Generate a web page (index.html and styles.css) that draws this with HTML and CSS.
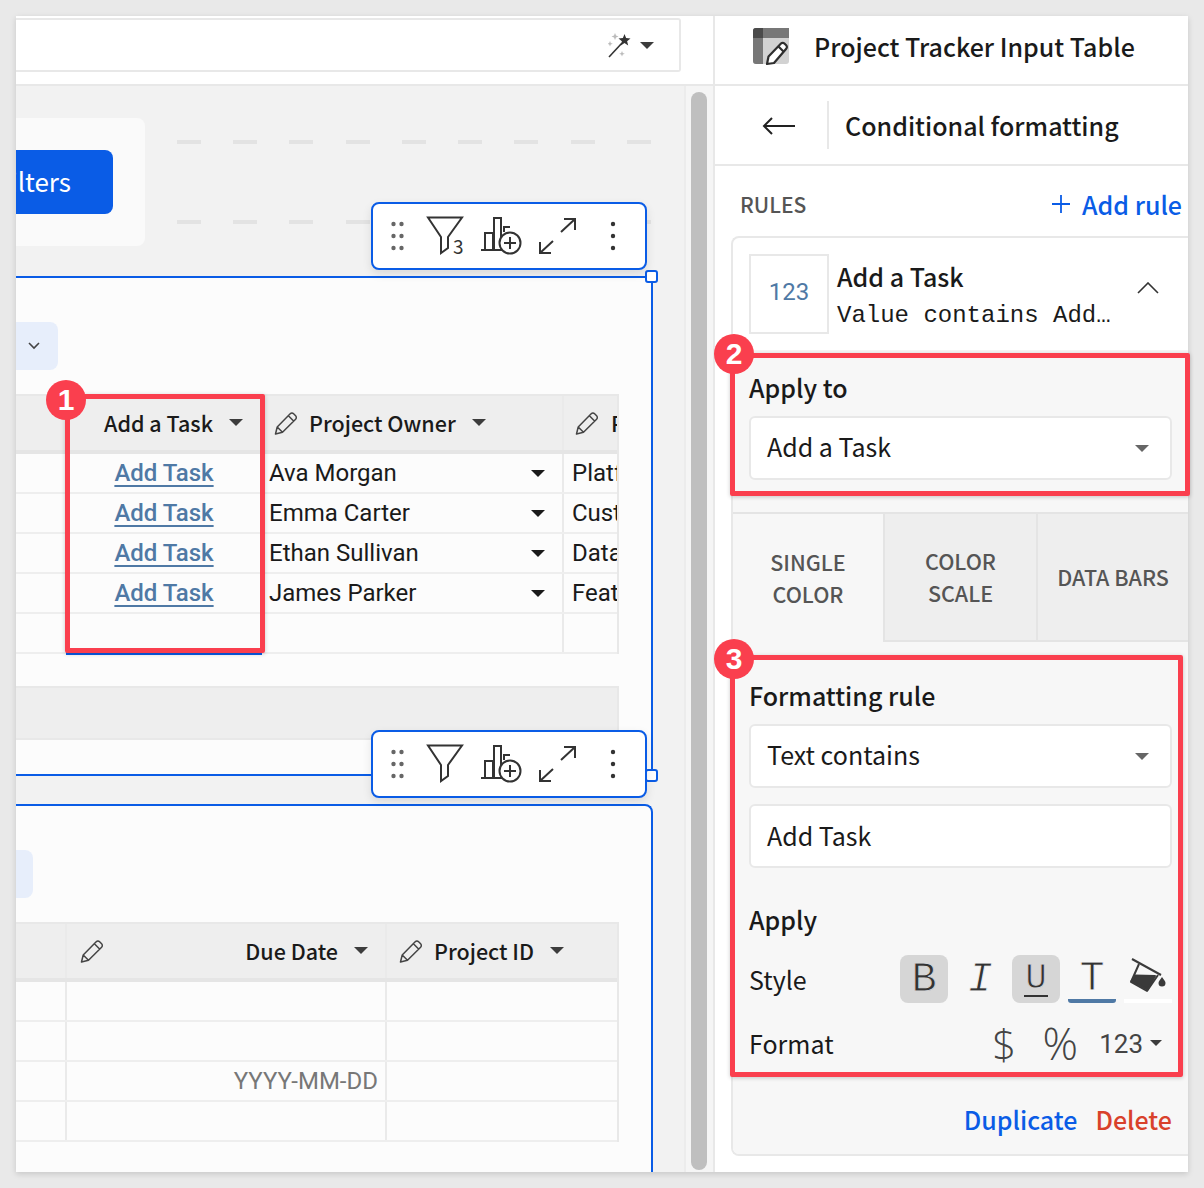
FILE: index.html
```html
<!DOCTYPE html>
<html lang="en">
<head>
    <meta charset="UTF-8">
    <title>Conditional formatting</title>
    <link rel="stylesheet" href="styles.css">
</head>
<body>
<svg class="defs" width="0" height="0">
    <symbol id="pencil" viewBox="0 0 24 24">
        <path d="M1.500 23l1.700-7L16.200 2.800a2.400 2.400 0 0 1 3.400 0l2 2a2.400 2.400 0 0 1 0 3.400L8.500 21.300z M14.400 4.800l5.200 5.200 M3.200 16l5.300 5.300" fill="none" stroke="#444" stroke-width="1.500" stroke-linejoin="round"/>
    </symbol>
    <symbol id="grip" viewBox="0 0 13 30">
        <g fill="#666"><circle cx="2.500" cy="3" r="2.200"/><circle cx="10.500" cy="3" r="2.200"/><circle cx="2.500" cy="15" r="2.200"/><circle cx="10.500" cy="15" r="2.200"/><circle cx="2.500" cy="27" r="2.200"/><circle cx="10.500" cy="27" r="2.200"/></g>
    </symbol>
    <symbol id="chartadd" viewBox="0 0 41 38">
        <path d="M0 33h23 M4 33V16h8v17 M13 33V1h7v24 M23 15v-5h6" fill="none" stroke="#333" stroke-width="2"/>
        <circle cx="29" cy="26" r="10.500" fill="#fff" stroke="#333" stroke-width="2"/>
        <path d="M29 20v12 M23 26h12" stroke="#333" stroke-width="2"/>
    </symbol>
    <symbol id="expand" viewBox="0 0 39 37">
        <path d="M23 14L37 1 M26 1h11v11 M15 23L2 35 M2 24v11h11" fill="none" stroke="#333" stroke-width="2"/>
    </symbol>
    <symbol id="more" viewBox="0 0 6 30">
        <g fill="#333"><circle cx="3" cy="3" r="2.200"/><circle cx="3" cy="15" r="2.200"/><circle cx="3" cy="27" r="2.200"/></g>
    </symbol>
</svg>

<div class="frame">
    <div class="main">
        <div class="topbar">
            <div class="searchbox">
                <svg class="wand" width="24" height="26" viewBox="0 0 24 26">
                    <path d="M1 25L14 11" stroke="#333" stroke-width="1.600"/>
                    <path d="M16.500 2l1.600 4 4.400 .4-3.400 2.800 1.100 4.300-3.700-2.400-3.700 2.400 1.100-4.300L10.500 6.400l4.400-.4z" fill="#333"/>
                    <path d="M7 1l1 2.500L10.500 4.500 8 5.500 7 8 6 5.500 3.500 4.500 6 3.500z M2 9l.8 2 2 .8-2 .8-.8 2-.8-2-2-.8 2-.8z M14 19l.8 2 2 .8-2 .8-.8 2-.8-2-2-.8 2-.8z" fill="#bbb"/>
                </svg>
                <span class="caret caret-dark"></span>
            </div>
        </div>
        <div class="workspace">
            <div class="canvas">
                <div class="filter-row">
                    <div class="filter-card"><div class="filter-btn"><span>Filters</span></div></div>
                    <div class="dashes"><div class="dash"></div><div class="dash"></div></div>
                </div>

                <div class="el el-first">
                    <div class="toolbar toolbar-a">
                        <div class="tool tool-grip"><svg width="13" height="30"><use href="#grip"/></svg></div>
                        <div class="tool">
                            <svg class="funnel" width="38" height="40" viewBox="0 0 38 40">
                                <path d="M2 1.500h34L22 21v11l-7 5V21z" fill="none" stroke="#333" stroke-width="2"/>
                                <text x="27" y="38" class="tool-num">3</text>
                            </svg>
                        </div>
                        <div class="tool"><svg width="41" height="38"><use href="#chartadd"/></svg></div>
                        <div class="tool"><svg width="39" height="37"><use href="#expand"/></svg></div>
                        <div class="tool"><svg width="6" height="30"><use href="#more"/></svg></div>
                    </div>
                    <span class="handle handle-top"></span>
                    <span class="handle handle-bottom"></span>
                    <div class="toolbar toolbar-b">
                        <div class="tool tool-grip"><svg width="13" height="30"><use href="#grip"/></svg></div>
                        <div class="tool">
                            <svg class="funnel" width="38" height="40" viewBox="0 0 38 40">
                                <path d="M2 1.500h34L22 21v11l-7 5V21z" fill="none" stroke="#333" stroke-width="2"/>
                            </svg>
                        </div>
                        <div class="tool"><svg width="41" height="38"><use href="#chartadd"/></svg></div>
                        <div class="tool"><svg width="39" height="37"><use href="#expand"/></svg></div>
                        <div class="tool"><svg width="6" height="30"><use href="#more"/></svg></div>
                    </div>

                    <div class="chip chip-wide">
                        <svg width="12" height="8" viewBox="0 0 12 8"><path d="M1 1l5 5 5-5" fill="none" stroke="#444" stroke-width="1.600"/></svg>
                    </div>

                    <div class="grid grid-tasks">
                        <div class="row row-head">
                            <div class="cell"></div>
                            <div class="cell head-task"><b>Add a Task</b><span class="caret caret-dark"></span></div>
                            <div class="cell head-owner"><svg width="24" height="24"><use href="#pencil"/></svg><b>Project Owner</b><span class="caret caret-dark"></span></div>
                            <div class="cell head-clip"><svg width="24" height="24"><use href="#pencil"/></svg><b>Project</b></div>
                        </div>
                        <div class="row">
                            <div class="cell"></div>
                            <div class="cell cell-link"><a>Add Task</a></div>
                            <div class="cell cell-pick"><span>Ava Morgan</span><span class="caret"></span></div>
                            <div class="cell cell-clip">Platform</div>
                        </div>
                        <div class="row">
                            <div class="cell"></div>
                            <div class="cell cell-link"><a>Add Task</a></div>
                            <div class="cell cell-pick"><span>Emma Carter</span><span class="caret"></span></div>
                            <div class="cell cell-clip">Customer</div>
                        </div>
                        <div class="row">
                            <div class="cell"></div>
                            <div class="cell cell-link"><a>Add Task</a></div>
                            <div class="cell cell-pick"><span>Ethan Sullivan</span><span class="caret"></span></div>
                            <div class="cell cell-clip">Data</div>
                        </div>
                        <div class="row">
                            <div class="cell"></div>
                            <div class="cell cell-link"><a>Add Task</a></div>
                            <div class="cell cell-pick"><span>James Parker</span><span class="caret"></span></div>
                            <div class="cell cell-clip">Feature</div>
                        </div>
                        <div class="row">
                            <div class="cell"></div>
                            <div class="cell cell-link"></div>
                            <div class="cell"></div>
                            <div class="cell"></div>
                        </div>
                    </div>
                    <div class="grey-bar"></div>
                </div>

                <div class="el el-second">
                    <div class="chip chip-narrow"></div>
                    <div class="grid grid-dates">
                        <div class="row row-head">
                            <div class="cell"></div>
                            <div class="cell head-date"><svg width="24" height="24"><use href="#pencil"/></svg><b>Due Date</b><span class="caret caret-dark"></span></div>
                            <div class="cell head-owner"><svg width="24" height="24"><use href="#pencil"/></svg><b>Project ID</b><span class="caret caret-dark"></span></div>
                        </div>
                        <div class="row"><div class="cell"></div><div class="cell"></div><div class="cell"></div></div>
                        <div class="row"><div class="cell"></div><div class="cell"></div><div class="cell"></div></div>
                        <div class="row"><div class="cell"></div><div class="cell cell-hint">YYYY-MM-DD</div><div class="cell"></div></div>
                        <div class="row"><div class="cell"></div><div class="cell"></div><div class="cell"></div></div>
                    </div>
                </div>
            </div>
            <div class="scroll-side"><div class="scroll-thumb"></div></div>
        </div>
    </div>

    <div class="panel">
        <div class="panel-title">
            <svg width="38" height="38" viewBox="0 0 38 38">
                <rect width="36" height="36" rx="3" fill="#d2d2d2"/>
                <path d="M3 0h33v10H10v26H3a3 3 0 0 1-3-3V3a3 3 0 0 1 3-3z" fill="#777"/>
                <path d="M3 0h7v10H0V3a3 3 0 0 1 3-3z" fill="#4a4a4a"/>
                <path d="M14 36l1.500-7.500L28 15.500a2.400 2.400 0 0 1 3.400 0l1.800 1.800a2.400 2.400 0 0 1 0 3.400L21 35z" fill="#fff" stroke="#2e2e2e" stroke-width="2.200" stroke-linejoin="round"/>
                <path d="M25.500 18.500l5.500 5.500" stroke="#2e2e2e" stroke-width="2.200"/>
            </svg>
            <h1>Project Tracker Input Table</h1>
        </div>
        <div class="panel-nav">
            <div class="back">
                <svg width="34" height="18" viewBox="0 0 34 18"><path d="M33 9H2 M10 1L2 9l8 8" fill="none" stroke="#222" stroke-width="2"/></svg>
            </div>
            <h2>Conditional formatting</h2>
        </div>
        <div class="rules-head">
            <span class="rules-label">RULES</span>
            <a class="add-rule"><svg width="18" height="18" viewBox="0 0 18 18"><path d="M9 0v18 M0 9h18" stroke="#0a5ce6" stroke-width="1.800"/></svg>Add rule</a>
        </div>

        <div class="rule-card">
            <div class="rule-head">
                <div class="type-box">123</div>
                <div class="rule-text">
                    <strong>Add a Task</strong>
                    <span>Value contains Add…</span>
                </div>
                <svg class="chev" width="22" height="12" viewBox="0 0 22 12"><path d="M1 11L11 1l10 10" fill="none" stroke="#333" stroke-width="1.600"/></svg>
            </div>
            <div class="rule-body">
                <div class="apply-to">
                    <div class="field-label">Apply to</div>
                    <div class="select"><span>Add a Task</span><span class="caret caret-grey"></span></div>
                </div>
                <div class="tabs">
                    <div class="tab tab-on">SINGLE<br>COLOR</div>
                    <div class="tab tab-mid">COLOR<br>SCALE</div>
                    <div class="tab tab-last">DATA BARS</div>
                </div>
                <div class="form">
                    <div class="field-label">Formatting rule</div>
                    <div class="select"><span>Text contains</span><span class="caret caret-grey"></span></div>
                    <div class="select select-input">Add Task</div>
                    <div class="field-label label-apply">Apply</div>
                    <div class="opt-row opt-style">
                        <span>Style</span>
                        <div class="opts">
                            <div class="opt opt-on">B</div>
                            <div class="opt opt-italic">I</div>
                            <div class="opt opt-on opt-under"><span>U</span></div>
                            <div class="opt opt-color">T</div>
                            <div class="opt opt-fill">
                                <svg width="36" height="38" viewBox="0 0 36 38">
                                    <path d="M2 1l29 16" fill="none" stroke="#3a3a3a" stroke-width="2"/>
                                    <path d="M9 6L1 24l16 9 11-16" fill="none" stroke="#3a3a3a" stroke-width="2" stroke-linejoin="round"/>
                                    <path d="M5 17.500L25 18 17.500 31.500 1.500 23z" fill="#3a3a3a" stroke="#3a3a3a" stroke-linejoin="round" stroke-width="2"/>
                                    <path d="M32 19c2 3 3.500 4.500 3.500 6a3.500 3.500 0 0 1-7 0c0-1.500 1.500-3 3.500-6z" fill="#3a3a3a"/>
                                </svg>
                            </div>
                        </div>
                    </div>
                    <div class="opt-row opt-format">
                        <span>Format</span>
                        <div class="formats">
                            <i class="fmt-dollar">$</i>
                            <i class="fmt-pct">%</i>
                            <i class="fmt-num">123</i>
                            <span class="caret caret-dark caret-small"></span>
                        </div>
                    </div>
                </div>
                <div class="card-actions">
                    <a class="act-dup">Duplicate</a>
                    <a class="act-del">Delete</a>
                </div>
            </div>
        </div>
    </div>

    <!-- callouts drawn over the screenshot -->
    <div class="mark mark-1"></div>
    <div class="mark mark-2"></div>
    <div class="mark mark-3"></div>
    <div class="badge badge-1">1</div>
    <div class="badge badge-2">2</div>
    <div class="badge badge-3">3</div>
</div>
</body>
</html>
```

FILE: styles.css
```css
:root {
    --blue: #0a5ce6;
    --link: #4f79a5;
    --line: #e8e8e8;
    --red: #fa3f4e;
    --sans: "Noto Sans CJK SC", "Noto Sans", sans-serif;
}
* { box-sizing: border-box; }
html, body { margin: 0; height: 100%; overflow: hidden; }
body {
    background: #e9e9e9;
    font-family: var(--sans);
    color: #1a1a1a;
    padding: 16px 0 0 16px;
}
.defs { position: absolute; }
b { font-weight: 500; }
svg { flex: none; }

.frame {
    position: relative;
    display: flex;
    width: 1172px;
    height: 1156px;
    background: #fff;
    box-shadow: 0 2px 6px rgba(0,0,0,0.15);
}
.main {
    width: 699px;
    display: flex;
    flex-direction: column;
    border-right: 2px solid var(--line);
}

/* top bar */
.topbar {
    height: 70px;
    padding-top: 2px;
    border-bottom: 2px solid var(--line);
}
.searchbox {
    width: 665px;
    height: 54px;
    border: 2px solid var(--line);
    border-left: none;
    border-radius: 0 3px 3px 0;
    display: flex;
    align-items: center;
    justify-content: flex-end;
    gap: 8px;
    padding-right: 25px;
}

.caret {
    display: inline-block;
    flex: none;
    width: 0;
    height: 0;
    border-left: 7px solid transparent;
    border-right: 7px solid transparent;
    border-top: 7px solid #1a1a1a;
}
.caret-dark { border-top-color: #3c3c3c; }
.caret-grey { border-top-color: #666; }
.caret-small { border-left-width: 6px; border-right-width: 6px; border-top-width: 6px; }

/* canvas */
.workspace { flex: 1; display: flex; min-height: 0; }
.canvas {
    width: 668px;
    background: #f2f2f2;
    padding-top: 32px;
    overflow: hidden;
}
.scroll-side {
    flex: 1;
    background: #f5f5f5;
    border-left: 2px solid #ececec;
    padding: 6px 6px 2px 5px;
}
.scroll-thumb {
    height: 100%;
    background: #bfbfbf;
    border-radius: 8px;
}
.filter-row { display: flex; height: 128px; }
.filter-card {
    width: 129px;
    background: #fafafa;
    border-radius: 0 8px 8px 0;
    padding-top: 32px;
}
.filter-btn {
    width: 97px;
    height: 64px;
    background: var(--blue);
    border-radius: 0 8px 8px 0;
    color: #fff;
    font-size: 26px;
    line-height: 62px;
    overflow: hidden;
    display: flex;
    justify-content: flex-end;
    padding-right: 42px;
    white-space: nowrap;
}
.dashes {
    margin-left: 32px;
    width: 474px;
    padding-top: 22px;
}
.dash {
    height: 4px;
    margin-bottom: 76px;
    background: repeating-linear-gradient(90deg, #e3e3e3 0 24px, transparent 24px 56.25px);
}

.el {
    position: relative;
    width: 637px;
    background: #fcfcfc;
    padding-top: 44px;
}
.el-first {
    height: 500px;
    margin-top: 30px;
    border-top: 2px solid var(--blue);
    border-right: 2px solid var(--blue);
    border-bottom: 2px solid var(--blue);
}
.el-second {
    height: 400px;
    margin-top: 28px;
    border-top: 2px solid var(--blue);
    border-right: 2px solid var(--blue);
    border-radius: 0 8px 0 0;
}
.toolbar {
    position: absolute;
    right: 4px;
    z-index: 2;
    display: flex;
    align-items: center;
    width: 276px;
    height: 68px;
    padding-left: 4px;
    background: #fff;
    border: 2px solid var(--blue);
    border-radius: 8px;
    box-shadow: 0 4px 10px rgba(0,0,0,0.1);
}
.toolbar-a { top: -76px; }
.toolbar-b { top: 452px; }
.tool {
    width: 56px;
    display: flex;
    justify-content: center;
    align-items: center;
}
.tool-grip { width: 40px; }
.funnel { overflow: visible; }
.tool-num { font: 19px var(--sans); fill: #333; }
.handle {
    position: absolute;
    right: -7px;
    z-index: 1;
    width: 13px;
    height: 13px;
    background: #fff;
    border: 2px solid var(--blue);
    border-radius: 3px;
}
.handle-top { top: -8px; }
.handle-bottom { bottom: -8px; }

.chip {
    height: 48px;
    background: #e7eefb;
    border-radius: 0 8px 8px 0;
    display: flex;
    align-items: center;
    justify-content: flex-end;
}
.chip-wide { width: 42px; padding-right: 18px; }
.chip-narrow { width: 17px; }

/* tables */
.grid {
    width: 603px;
    margin-top: 24px;
    border-top: 2px solid var(--line);
    border-right: 2px solid var(--line);
}
.row {
    display: grid;
    height: 40px;
    border-bottom: 2px solid #eee;
}
.grid-tasks .row { grid-template-columns: 50px 196px 300px 55px; }
.grid-dates .row { grid-template-columns: 49px 320px 232px; }
.row-head {
    height: 58px;
    background: #eee;
    border-bottom: 4px solid #e5e5e5;
}
.cell {
    display: flex;
    align-items: center;
    overflow: hidden;
    white-space: nowrap;
    font-family: Roboto, sans-serif;
    font-size: 24px;
}
.grid-tasks .cell:nth-child(4),
.grid-dates .cell:nth-child(2),
.grid-dates .cell:nth-child(3) { border-left: 2px solid #eaeaea; }
.row-head .cell { font-family: var(--sans); font-size: 21.5px; padding-bottom: 1px; }
.head-task { justify-content: flex-end; gap: 16px; padding-right: 19px; }
.row-head .head-owner { gap: 11px; padding-left: 12px; }
.head-owner .caret { margin-left: 5px; }
.row-head .head-clip { gap: 12px; padding-left: 11px; }
.head-date { padding: 0 17px 0 13px; gap: 16px; }
.head-date svg { margin-right: auto; }
.cell-link { justify-content: center; }
.cell-link a {
    color: var(--link);
    font-weight: 500;
    text-decoration: underline;
    text-underline-offset: 4px;
    text-decoration-thickness: 2px;
}
.grid-tasks .cell-link { box-shadow: inset -1px 0 0 #7fa6ea; }
.grid-tasks .row:last-child .cell-link { box-shadow: inset -1px 0 0 #7fa6ea, 0 3px 0 var(--blue); overflow: visible; }
.cell-pick { justify-content: space-between; padding: 0 17px 0 7px; }
.cell-clip { padding-left: 8px; }
.cell-hint { justify-content: flex-end; padding-right: 7px; color: #777; }
.grey-bar {
    width: 603px;
    height: 54px;
    margin-top: 32px;
    background: #eee;
    border: 2px solid #e8e8e8;
    border-left: none;
}

/* right panel */
.panel { flex: 1; min-width: 0; }
.panel-title {
    height: 70px;
    display: flex;
    align-items: center;
    gap: 23px;
    padding: 0 0 6px 38px;
    border-bottom: 2px solid var(--line);
}
h1, h2 { margin: 0; font-size: 25px; font-weight: 500; line-height: 36px; }
h1 { margin-bottom: 2px; }
.panel-nav {
    height: 80px;
    display: flex;
    align-items: center;
    border-bottom: 2px solid var(--line);
}
.back {
    width: 114px;
    height: 48px;
    margin-right: 16px;
    padding: 15px 0 0 47px;
    border-right: 2px solid var(--line);
}
.rules-head {
    height: 70px;
    display: flex;
    align-items: center;
    justify-content: space-between;
    padding: 6px 6px 0 25px;
}
.rules-label { font-size: 21px; font-weight: 500; color: #555; }
.add-rule {
    display: flex;
    align-items: center;
    gap: 12px;
    font-size: 25px;
    font-weight: 500;
    color: var(--blue);
}
.rule-card {
    margin-left: 16px;
    height: 920px;
    border: 2px solid var(--line);
    border-right: none;
    border-radius: 8px 0 0 8px;
    overflow: hidden;
}
.rule-head {
    position: relative;
    height: 112px;
    display: flex;
    gap: 8px;
    padding: 16px 0 0 16px;
}
.type-box {
    width: 80px;
    height: 80px;
    border: 2px solid var(--line);
    color: var(--link);
    font-family: Roboto, sans-serif;
    font-size: 24px;
    line-height: 72px;
    text-align: center;
}
.rule-text { display: flex; flex-direction: column; }
.rule-text strong { font-size: 25px; font-weight: 500; line-height: 34px; margin-top: 5px; }
.rule-text span {
    font-family: "Liberation Mono", monospace;
    font-size: 24px;
    line-height: 36px;
    margin-top: 5px;
    white-space: nowrap;
}
.chev { position: absolute; left: 404px; top: 44px; }
.rule-body { background: #f7f7f7; height: 810px; }
.apply-to { padding: 22px 16px 32px 16px; }
.field-label { font-size: 25px; font-weight: 500; line-height: 30px; padding-bottom: 2px; }
.select {
    height: 64px;
    margin-top: 12px;
    padding: 0 21px 4px 16px;
    display: flex;
    align-items: center;
    justify-content: space-between;
    background: #fff;
    border: 2px solid var(--line);
    border-radius: 6px;
    font-size: 25px;
}
.select .caret { margin-top: 4px; }
.select-input { margin-top: 16px; padding-bottom: 2px; }
.tabs {
    height: 130px;
    display: flex;
    border-top: 2px solid #e4e4e4;
    font-size: 21.5px;
    font-weight: 500;
    line-height: 32px;
    color: #555;
    text-align: center;
}
.tab {
    display: flex;
    align-items: center;
    justify-content: center;
    padding-bottom: 1px;
    background: #eee;
    border-bottom: 2px solid #e4e4e4;
}
.tab-on { width: 152px; background: #f7f7f7; border-bottom: none; border-right: 2px solid #e4e4e4; }
.tab-mid { width: 153px; border-right: 2px solid #e4e4e4; }
.tab-last { flex: 1; }
.form { padding: 38px 16px 0 16px; }
.label-apply { margin-top: 36px; }
.opt-row {
    display: flex;
    align-items: center;
    justify-content: space-between;
    height: 48px;
    font-size: 25px;
}
.opt-style { margin-top: 19px; }
.opt-format { margin-top: 16px; }
.opts { display: flex; gap: 8px; }
.opt {
    width: 48px;
    height: 48px;
    padding-top: 2px;
    border-radius: 8px;
    display: flex;
    align-items: center;
    justify-content: center;
    font-family: "Liberation Mono", monospace;
    font-size: 42px;
    line-height: 48px;
    color: #333;
    -webkit-text-stroke: 0.9px #f7f7f7;
}
.opt-on { background: #d6d6d6; -webkit-text-stroke-color: #d6d6d6; }
.opt-italic { font-style: italic; }
.opt-under { padding-top: 0; }
.opt-under span {
    font-size: 36px;
    line-height: 33px;
    border-bottom: 2px solid #333;
    width: 24px;
    text-align: center;
}
.opt-color { padding-top: 4px; border-bottom: 4px solid var(--link); border-radius: 0 0 3px 3px; }
.opt-fill { padding-top: 0; border-bottom: 4px solid #fff; border-radius: 0; }
.formats { display: flex; align-items: center; padding-right: 10px; color: #444; }
.formats i { font-style: normal; }
.fmt-dollar { font: 300 42px "Open Sans", sans-serif; width: 56px; text-align: center; margin-right: 8px; }
.fmt-pct { font: 300 44px "Open Sans", sans-serif; width: 40px; display: flex; justify-content: center; margin-right: 19px; }
.fmt-num { font: 26px Roboto, sans-serif; margin-right: 7px; padding-top: 2px; }
.card-actions {
    display: flex;
    justify-content: flex-end;
    gap: 18px;
    padding: 36px 16px 0 0;
    font-size: 25px;
    font-weight: 500;
    line-height: 32px;
}
.act-dup { color: var(--blue); }
.act-del { color: #d9412b; }

/* numbered callouts */
.mark {
    position: absolute;
    z-index: 5;
    border: 5px solid var(--red);
    border-radius: 2px;
    box-shadow: 0 1px 4px rgba(0,0,0,0.2);
}
.mark-1 { left: 49px; top: 378px; width: 200px; height: 259px; }
.mark-2 { left: 714px; top: 337px; width: 460px; height: 143px; }
.mark-3 { left: 714px; top: 639px; width: 453px; height: 422px; }
.badge {
    position: absolute;
    z-index: 6;
    width: 40px;
    height: 40px;
    background: var(--red);
    border-radius: 50%;
    color: #fff;
    font-family: "Liberation Sans", sans-serif;
    font-size: 30px;
    font-weight: 700;
    line-height: 40px;
    text-align: center;
}
.badge-1 { left: 30px; top: 364px; }
.badge-2 { left: 698px; top: 318px; }
.badge-3 { left: 698px; top: 623px; }
```
